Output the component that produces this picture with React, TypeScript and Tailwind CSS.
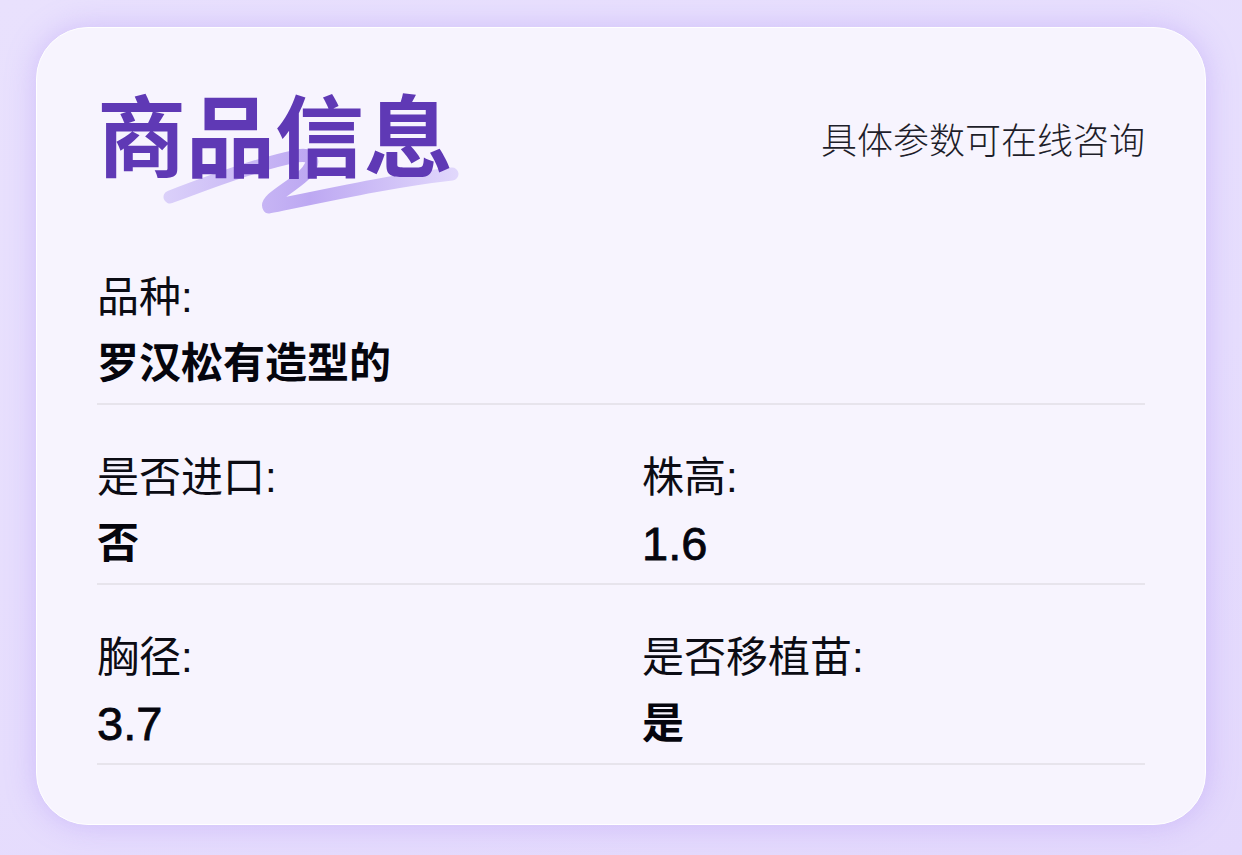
import React from "react";

const rows: { label: string; value: string }[][] = [
  [{ label: "品种:", value: "罗汉松有造型的" }],
  [
    { label: "是否进口:", value: "否" },
    { label: "株高:", value: "1.6" },
  ],
  [
    { label: "胸径:", value: "3.7" },
    { label: "是否移植苗:", value: "是" },
  ],
];

const font = {
  fontFamily: '"Liberation Sans", "Noto Sans CJK SC", sans-serif',
};

const isNumber = (v: string) => /^[\d.]+$/.test(v);

// light purple brush swoosh behind the title
const BrushStroke: React.FC = () => (
  <svg
    className="absolute left-0 top-0 pointer-events-none"
    width="400"
    height="200"
    viewBox="0 0 400 200"
    fill="none"
  >
    <defs>
      <linearGradient id="brush" gradientUnits="userSpaceOnUse" x1="60" y1="0" x2="365" y2="0">
        <stop offset="0" stopColor="#dcd2fa" />
        <stop offset="0.5" stopColor="#bda8f2" />
        <stop offset="1" stopColor="#e2d9fc" />
      </linearGradient>
    </defs>
    <path
      d="M73 169 C 110 155, 160 136, 200 128 C 216 125, 220 134, 207 147 C 192 161, 168 172, 172 179 C 240 165, 300 152, 355 146"
      stroke="url(#brush)"
      strokeWidth="13"
      strokeLinecap="round"
      strokeLinejoin="round"
    />
  </svg>
);

const App: React.FC = () => {
  return (
    <div
      className="relative w-full h-[855px] overflow-hidden bg-[#e7defd] px-[36px] pt-[27px]"
      style={font}
    >
      <div className="pointer-events-none absolute inset-0 bg-[linear-gradient(160deg,#e9e1fd_0%,#e6ddfd_60%,#e3d8fc_100%)]" />
      <div className="relative h-[798px] rounded-[52px] border border-white bg-[#f7f4fe] px-[60px] shadow-[0_0_30px_rgba(160,125,245,0.35)]">
        <div className="relative flex items-center justify-between pt-[47px] h-[174px]">
          <BrushStroke />
          <h1 className="relative text-[89px] leading-[100px] font-semibold text-[#5f39b5]">
            商品信息
          </h1>
          <p className="relative text-[36px] leading-[48px] font-light text-[#1e1e2a] mt-[6px]">
            具体参数可在线咨询
          </p>
        </div>
        <div className="pt-[23px]">
          {rows.map((row, i) => (
            <div
              key={i}
              className="grid grid-cols-2 gap-x-[42px] pt-[49px] pb-[15px] border-b-2 border-[#e7e4ec]"
            >
              {row.map((item) => (
                <div key={item.label}>
                  <div className="text-[42px] leading-[48px] text-[#0c0c14]">
                    {item.label}
                  </div>
                  {isNumber(item.value) ? (
                    <div className="mt-[18px] text-[47px] leading-[48px] font-normal text-[#05050d] [-webkit-text-stroke:0.8px_#05050d]">
                      {item.value}
                    </div>
                  ) : (
                    <div className="mt-[18px] text-[42px] leading-[48px] font-bold text-[#05050d]">
                      {item.value}
                    </div>
                  )}
                </div>
              ))}
            </div>
          ))}
        </div>
      </div>
    </div>
  );
};

export default App;
